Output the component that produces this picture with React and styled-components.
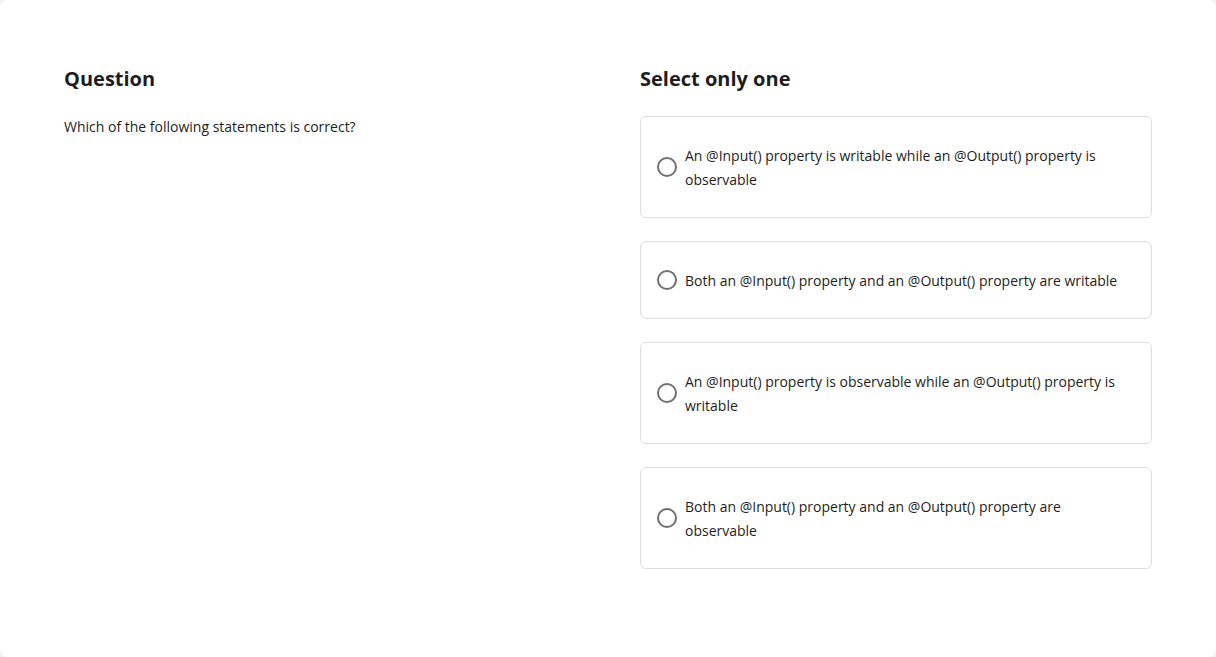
import React from 'react';
import styled, { createGlobalStyle } from 'styled-components';

const GlobalStyle = createGlobalStyle`
  html, body {
    margin: 0;
    padding: 0;
    background-color: #f2f2f2;
  }
  body {
    font-family: "Open Sans", "Noto Sans", sans-serif;
    color: #1d1d1d;
  }
`;

const Card = styled.div`
  box-sizing: border-box;
  height: 657px;
  background-color: #ffffff;
  border-radius: 8px;
  padding: 64px;
  display: grid;
  grid-template-columns: 1fr 1fr;
  column-gap: 64px;
  align-items: start;
`;

const Column = styled.section`
  display: flex;
  flex-direction: column;
`;

const Heading = styled.h2`
  margin: 0 0 22px;
  font-size: 20px;
  font-weight: 700;
  line-height: 30px;
  color: #1d1d1d;
`;

const Prompt = styled.p`
  margin: 0;
  font-size: 14px;
  line-height: 22px;
`;

const OptionList = styled.div`
  display: flex;
  flex-direction: column;
  gap: 23px;
`;

const Option = styled.label`
  display: flex;
  align-items: center;
  gap: 8px;
  padding: 26px 16px;
  border: 1px solid #dedede;
  border-radius: 6px;
  background: #ffffff;
  cursor: pointer;
`;

const Radio = styled.span`
  flex: none;
  box-sizing: border-box;
  width: 20px;
  height: 20px;
  border-radius: 50%;
  border: 2px solid #707070;
  background: #ffffff;
`;

const OptionText = styled.span`
  margin: 1px 0 -1px;
  font-size: 14px;
  line-height: 24px;
  color: #1d1d1d;
`;

const options = [
  'An @Input() property is writable while an @Output() property is observable',
  'Both an @Input() property and an @Output() property are writable',
  'An @Input() property is observable while an @Output() property is writable',
  'Both an @Input() property and an @Output() property are observable',
];

export default function App() {
  return (
    <>
      <GlobalStyle />
      <Card>
        <Column>
          <Heading>Question</Heading>
          <Prompt>Which of the following statements is correct?</Prompt>
        </Column>
        <Column>
          <Heading>Select only one</Heading>
          <OptionList>
            {options.map((text) => (
              <Option key={text}>
                <Radio />
                <OptionText>{text}</OptionText>
              </Option>
            ))}
          </OptionList>
        </Column>
      </Card>
    </>
  );
}
